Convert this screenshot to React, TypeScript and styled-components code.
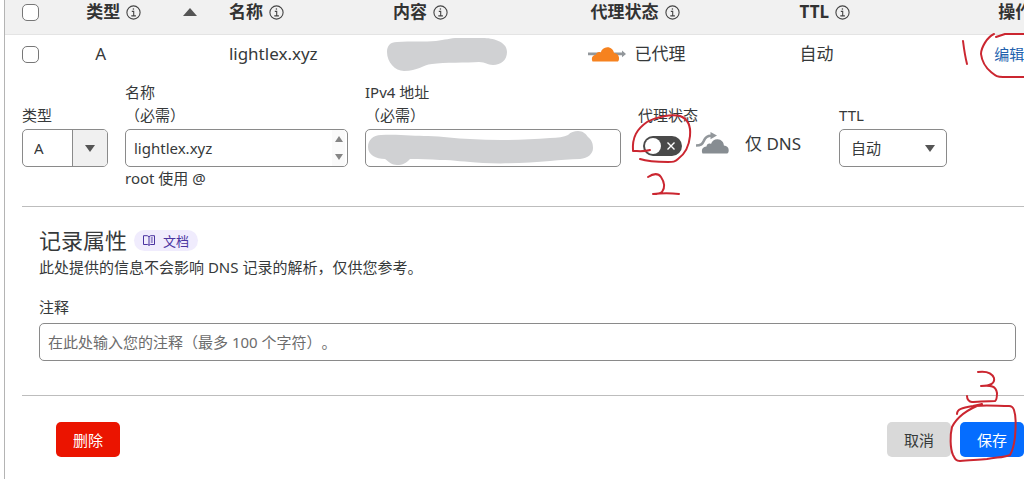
import React from "react";
import styled, { createGlobalStyle } from "styled-components";

const GlobalStyle = createGlobalStyle`
  *, *::before, *::after { box-sizing: border-box; }
  body {
    margin: 0;
    background: #fff;
    color: #36393a;
    overflow-x: hidden;
    font-family: "Noto Sans", "Noto Sans CJK SC", sans-serif;
    font-size: 15px;
    text-spacing-trim: space-all;
  }
  button, input, select, textarea { font: inherit; color: inherit; text-spacing-trim: inherit; }
`;

const Panel = styled.main`
  min-height: 100vh;
  margin-left: 4px;
  border-left: 1px solid #b4b4b4;
  overflow: hidden;
`;

const RecordTable = styled.table`
  width: 100%;
  table-layout: fixed;
  border-collapse: collapse;
  font-size: 17px;
  line-height: 24px;
  white-space: nowrap;
`;

const Col = styled.col<{ $w: string }>`
  width: ${(p) => p.$w};
`;

const HeadCell = styled.th`
  height: 34px;
  padding: 0 0 9px 15px;
  background: #f1f1f1;
  border-bottom: 1px solid #e4e4e4;
  color: #333;
  font-weight: 700;
  text-align: left;
`;

const HeadLabel = styled.span`
  display: flex;
  align-items: center;
  gap: 6px;
`;

const SortArrow = styled.span`
  margin-left: auto;
  margin-right: 17px;
  display: flex;
`;

const Cell = styled.td<{ $indent?: number }>`
  position: relative;
  height: 40px;
  padding: 0 0 0 ${(p) => p.$indent ?? 15}px;
`;

const Inline = styled.span`
  display: flex;
  align-items: center;
  gap: 9px;
`;

const EditLink = styled.a`
  color: #2160ad;
  font-size: 15px;
  text-decoration: none;
`;

const Tick = styled.input`
  appearance: none;
  display: block;
  width: 17px;
  height: 17px;
  margin: 0 0 0 2px;
  border: 1px solid #777;
  border-radius: 5px;
  background: #fff;
`;

const Ink = styled.svg<{ $left: number; $top: number }>`
  position: absolute;
  left: ${(p) => p.$left}px;
  top: ${(p) => p.$top}px;
  fill: none;
  stroke: #cb2630;
  stroke-width: 2;
  stroke-linecap: round;
  stroke-linejoin: round;
  pointer-events: none;
  z-index: 2;
`;

const EditForm = styled.form`
  padding: 7px 0 0 17px;
`;

const Fields = styled.div`
  display: grid;
  grid-template-columns: 86px minmax(0, 223fr) minmax(0, 256fr) 184px 108px;
  column-gap: 17px;
  padding: 0 77px 16px 0;
  line-height: 23px;
`;

const Field = styled.div`
  position: relative;
`;

const FieldLabel = styled.label`
  display: flex;
  flex-direction: column;
  justify-content: flex-end;
  height: 46px;
  margin-bottom: 2px;
`;

const Control = styled.div`
  position: relative;
  height: 38px;
  border: 1px solid #8a8a8a;
  border-radius: 5px;
  background: #fff;
  overflow: hidden;
`;

const Select = styled.select`
  appearance: none;
  width: 100%;
  height: 100%;
  padding: 0 11px;
  border: 0;
  background: transparent;
`;

const SelectArrow = styled.span<{ $filled?: boolean }>`
  position: absolute;
  top: 0;
  right: 0;
  bottom: 0;
  width: ${(p) => (p.$filled ? 35 : 33)}px;
  display: flex;
  align-items: center;
  justify-content: center;
  background: ${(p) => (p.$filled ? "#f0f0f0" : "transparent")};
  border-left: ${(p) => (p.$filled ? "1px solid #8a8a8a" : "0")};
  pointer-events: none;
`;

const TextInput = styled.input`
  display: block;
  width: 100%;
  height: 100%;
  padding: 0 8px;
  border: 0;
  background: transparent;
  &::placeholder { color: #6c6c6c; opacity: 1; }
`;

const Stepper = styled.span`
  position: absolute;
  top: 0;
  right: 2px;
  bottom: 0;
  width: 13px;
  display: flex;
  flex-direction: column;
  align-items: center;
  justify-content: space-between;
  padding: 6px 0;
  background: #fafafa;
`;

const Redaction = styled.svg`
  position: absolute;
  left: 2px;
  top: 1px;
`;

const ProxyRow = styled.div`
  display: flex;
  align-items: center;
  height: 28px;
  padding-left: 5px;
  font-size: 17px;
`;

const Switch = styled.span`
  position: relative;
  display: flex;
  width: 39px;
  height: 20px;
  margin: 6px 14px 0 0;
  svg { position: absolute; inset: 0; pointer-events: none; }
`;

const SwitchInput = styled.input`
  appearance: none;
  width: 100%;
  height: 100%;
  margin: 0;
  border-radius: 10px;
  background: #4a4a4a;
`;

const ProxyText = styled.span`
  margin-left: 15px;
`;

const Attributes = styled.section`
  padding: 20px 8px 34px 17px;
  border-top: 1px solid #bdbdbd;
  border-bottom: 1px solid #bdbdbd;
`;

const TitleRow = styled.div`
  display: flex;
  align-items: center;
  gap: 7px;
  height: 26px;
  margin-bottom: 2px;
`;

const Title = styled.h2`
  margin: 0;
  font-size: 22px;
  line-height: 26px;
  font-weight: 400;
`;

const DocsLink = styled.a`
  display: flex;
  align-items: center;
  gap: 8px;
  height: 21px;
  padding: 0 9px;
  border-radius: 11px;
  background: #f0ecfd;
  color: #4a33a0;
  font-size: 13px;
  text-decoration: none;
`;

const Description = styled.p`
  margin: 0 0 17px;
  line-height: 24px;
`;

const NoteLabel = styled.label`
  display: block;
  margin-bottom: 4px;
  line-height: 23px;
`;

const Actions = styled.div`
  display: flex;
  gap: 9px;
  padding: 26px 0 22px 34px;
`;

const Spacer = styled.span`
  flex: 1;
`;

const Button = styled.button<{ $bg: string; $color?: string }>`
  width: 64px;
  height: 35px;
  padding: 0;
  border: 0;
  border-radius: 5px;
  background: ${(p) => p.$bg};
  color: ${(p) => p.$color ?? "#fff"};
`;

const SaveSlot = styled.span`
  position: relative;
  display: flex;
`;

const InfoIcon = () => (
  <svg width="15" height="15" viewBox="0 0 15 15" fill="none" stroke="#444" strokeWidth="1.1">
    <circle cx="7.5" cy="7.5" r="6.6" />
    <path d="M5.8 6.4h1.9v4.4M5.300 10.9h4.600" />
    <circle cx="7.4" cy="4" r=".8" fill="#444" stroke="none" />
  </svg>
);

const Triangle = ({ up, w = 10, h = 7, color = "#555" }: { up?: boolean; w?: number; h?: number; color?: string }) => (
  <svg width={w} height={h} viewBox="0 0 10 7" preserveAspectRatio="none" fill={color}>
    <path d={up ? "M5 0 10 7H0z" : "M0 0h10L5 7z"} />
  </svg>
);

const ProxiedIcon = () => (
  <svg width="38" height="16" viewBox="0 0 38 16">
    <path d="M0 6.500h34V4.500l4 3.500-4 3.300V9.200H0z" fill="#92979b" />
    <path d="M4.500 15.500C3 12.300 4.300 9 8 8.700c.3-2.200 2.500-3.300 4.700-2.300C13.700 3.300 16 1.200 19.300 1.200c3.700 0 6.200 2.500 6.700 5.800 3.500.500 5.500 3 5 6.300-.1 1-.4 1.700-1 2.200z" fill="#f6821f" />
  </svg>
);

const DnsOnlyIcon = () => (
  <svg width="34" height="23" viewBox="0 0 34 23">
    <path d="M0 13.500c5 0 6.500-1.500 8-5 1.300-3.300 3.300-4.800 7-4.800" fill="none" stroke="#92979b" strokeWidth="2.600" />
    <path d="M14.500 0 21 3.600 14.500 7.300z" fill="#92979b" />
    <path d="M6.500 21.500c-1.500-3.500 0-6.700 4-7 .2-2.500 2.600-3.500 4.500-2.500C16 9 18.500 7 21.700 7.200c3.600.2 6 2.800 6.200 6.300 3 .2 5 2.300 4.800 5 0 1.600-.6 2.600-1.400 3z" fill="#878d92" />
  </svg>
);

const DocsIcon = () => (
  <svg width="12" height="11" viewBox="0 0 12 11" fill="none" stroke="#4a33a0">
    <path d="M.5.700h3.800L6 1.700 7.700.700h3.800v8.800H7.300L6 10.400l-1.300-.9H.5zM6 1.700v8.500M7.800 3h2M7.800 5h2M7.800 7h2" />
  </svg>
);

export default function App() {
  return (
    <>
      <GlobalStyle />
      <Panel>
        <RecordTable>
          <colgroup>
            <Col $w="6.500%" />
            <Col $w="14%" />
            <Col $w="16.100%" />
            <Col $w="19.400%" />
            <Col $w="20.500%" />
            <Col $w="19.500%" />
            <Col $w="4%" />
          </colgroup>
          <thead>
            <tr>
              <HeadCell><Tick type="checkbox" aria-label="全选" /></HeadCell>
              <HeadCell>
                <HeadLabel>类型 <InfoIcon /><SortArrow><Triangle up w={14} h={8} /></SortArrow></HeadLabel>
              </HeadCell>
              <HeadCell><HeadLabel>名称 <InfoIcon /></HeadLabel></HeadCell>
              <HeadCell><HeadLabel>内容 <InfoIcon /></HeadLabel></HeadCell>
              <HeadCell><HeadLabel>代理状态 <InfoIcon /></HeadLabel></HeadCell>
              <HeadCell><HeadLabel>TTL <InfoIcon /></HeadLabel></HeadCell>
              <HeadCell>操作</HeadCell>
            </tr>
          </thead>
          <tbody>
            <tr>
              <Cell><Tick type="checkbox" aria-label="选择 lightlex.xyz" /></Cell>
              <Cell $indent={24}>A</Cell>
              <Cell>lightlex.xyz</Cell>
              <Cell $indent={9}>
                <svg width="120" height="34" viewBox="387 38 120 34" display="block">
                  <path d="M387 53c0-6 3-10 10-10 14-1 28 0 39-1 9-1 14-3 22-3h25c9 0 24 3 24 14 0 8-6 13-14 13-6 0-7-3-14-3-12 1-35 0-47 2-10 1-14 7-28 7-9 0-17-9-17-19z" fill="#d0d1d3" />
                </svg>
              </Cell>
              <Cell $indent={12}><Inline><ProxiedIcon />已代理</Inline></Cell>
              <Cell>自动</Cell>
              <Cell $indent={11}>
                <EditLink href="#edit">编辑</EditLink>
                <Ink $left={-25} $top={-4} width="90" height="50" viewBox="958 30 90 50">
                  <path d="M963 40c1 8 2 15 4 23M994 33c-7 3-13 14-13 20 1 8 4 13 10 18 5 4 6 5 12 5h40M996 36l9-3h40" />
                </Ink>
              </Cell>
            </tr>
          </tbody>
        </RecordTable>

        <EditForm onSubmit={(e: React.FormEvent) => e.preventDefault()}>
          <Fields>
            <Field>
              <FieldLabel htmlFor="type">类型</FieldLabel>
              <Control>
                <Select id="type"><option>A</option></Select>
                <SelectArrow $filled><Triangle /></SelectArrow>
              </Control>
            </Field>
            <Field>
              <FieldLabel htmlFor="name"><span>名称</span><span>（必需）</span></FieldLabel>
              <Control>
                <TextInput id="name" defaultValue="lightlex.xyz" />
                <Stepper>
                  <Triangle up w={8} h={6} color="#858585" />
                  <Triangle w={8} h={6} color="#858585" />
                </Stepper>
              </Control>
              <span>root 使用 @</span>
            </Field>
            <Field>
              <FieldLabel htmlFor="address"><span>IPv4 地址</span><span>（必需）</span></FieldLabel>
              <Control>
                <TextInput id="address" />
                <Redaction width="226" height="35" viewBox="368 131 226 35">
                  <path d="M368 147c0-7 5-12 13-12 16-1 34 1 47 1 14 0 28 3 42 3 27 2 55 1 80-1 8 0 14-1 18-3 3-3 6-4 10-4 5 0 8 3 10 6 4 3 5 7 5 11 0 6-5 10-13 11-10 0-20 1-30 2-20 2-47 3-67 2-20-1-27-3-43-3-10-1-20-1-30-1-4 4-7 6-13 6-5 0-8-3-12-6-9 0-17-4-17-12z" fill="#d0d1d3" />
                </Redaction>
              </Control>
            </Field>
            <Field>
              <FieldLabel htmlFor="proxy">代理状态</FieldLabel>
              <ProxyRow>
                <Switch>
                  <SwitchInput id="proxy" type="checkbox" role="switch" />
                  <svg width="39" height="20" viewBox="0 0 39 20">
                    <circle cx="10" cy="10" r="8" fill="#fff" />
                    <path d="m24.500 6.500 7 7m0-7-7 7" stroke="#fff" strokeWidth="1.400" />
                  </svg>
                </Switch>
                <DnsOnlyIcon />
                <ProxyText>仅 DNS</ProxyText>
              </ProxyRow>
              <Ink $left={-10} $top={29} width="70" height="90" viewBox="628 110 70 90">
                <path d="M650 150c-6 2-12 1-17 1-1-14 4-22 14-29 9-5 24-8 33-6 8 3 11 10 10 20-1 11-5 18-12 23-3 3-5 3-10 3-10 0-19 0-28-3M648 177c6-4 10-4 13 0 4 6 4 11 1 15-2 2-6 2-9 2 9-1 18-1 26 0" />
              </Ink>
            </Field>
            <Field>
              <FieldLabel htmlFor="ttl">TTL</FieldLabel>
              <Control>
                <Select id="ttl"><option>自动</option></Select>
                <SelectArrow><Triangle /></SelectArrow>
              </Control>
            </Field>
          </Fields>

          <Attributes>
            <TitleRow>
              <Title>记录属性</Title>
              <DocsLink href="#docs"><DocsIcon />文档</DocsLink>
            </TitleRow>
            <Description>此处提供的信息不会影响 DNS 记录的解析，仅供您参考。</Description>
            <NoteLabel htmlFor="note">注释</NoteLabel>
            <Control>
              <TextInput id="note" placeholder="在此处输入您的注释（最多 100 个字符）。" />
            </Control>
          </Attributes>

          <Actions>
            <Button type="button" $bg="#eb1400">删除</Button>
            <Spacer />
            <Button type="button" $bg="#d9d9d9" $color="#36393a">取消</Button>
            <SaveSlot>
              <Button type="submit" $bg="#056dff">保存</Button>
              <Ink $left={-12} $top={-54} width="74" height="98" viewBox="948 368 74 98">
                <path d="M978 372c8-1 14 1 16 6 1 5-3 8-13 8 10-1 15 0 16 7 0 4 0 7-2 8-8 0-18 1-23 1-3 0-5-3-5-6M957 414c0-5 5-6 16-8l9-2c-11 4-24 11-30 23-2 8-2 21 1 28 2 4 3 6 7 6 9-1 18-1 27-2 9-2 16-1 23-4 3-5 4-10 5-18 1-11 1-21-1-27-1-3-2-4-5-4-11 0-23-1-34 0" />
              </Ink>
            </SaveSlot>
          </Actions>
        </EditForm>
      </Panel>
    </>
  );
}
